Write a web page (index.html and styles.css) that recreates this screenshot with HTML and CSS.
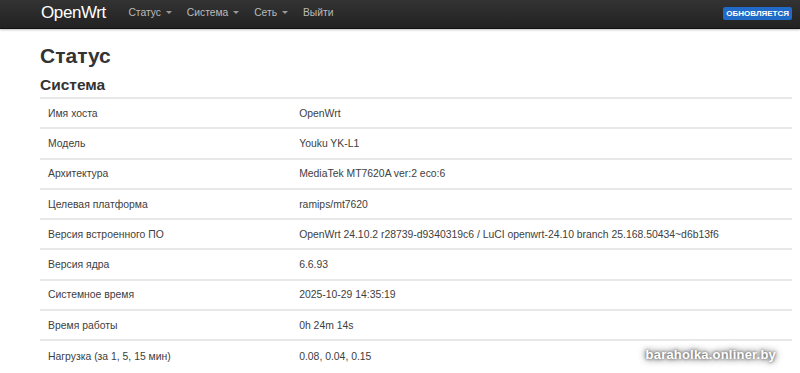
FILE: index.html
```html
<!DOCTYPE html>
<html lang="ru">
<head>
    <meta charset="UTF-8">
    <meta name="viewport" content="width=device-width, initial-scale=1.0">
    <title>OpenWrt - Статус</title>
    <link rel="stylesheet" href="styles.css">
</head>
<body>
    <!-- Top navigation -->
    <div class="navbar">
        <div class="container nav-inner">
            <a class="brand" href="#">OpenWrt</a>
            <ul class="nav">
                <li><a href="#">Статус <span class="caret"></span></a></li>
                <li><a href="#">Система <span class="caret"></span></a></li>
                <li><a href="#">Сеть <span class="caret"></span></a></li>
                <li><a href="#">Выйти</a></li>
            </ul>
            <span class="badge">Обновляется</span>
        </div>
    </div>

    <div class="container main">
        <h2>Статус</h2>
        <h3>Система</h3>
        <table class="status-table">
            <tr><td class="label">Имя хоста</td><td>OpenWrt</td></tr>
            <tr><td class="label">Модель</td><td>Youku YK-L1</td></tr>
            <tr><td class="label">Архитектура</td><td>MediaTek MT7620A ver:2 eco:6</td></tr>
            <tr><td class="label">Целевая платформа</td><td>ramips/mt7620</td></tr>
            <tr><td class="label">Версия встроенного ПО</td><td>OpenWrt 24.10.2 r28739-d9340319c6 / LuCI openwrt-24.10 branch 25.168.50434~d6b13f6</td></tr>
            <tr><td class="label">Версия ядра</td><td>6.6.93</td></tr>
            <tr><td class="label">Системное время</td><td>2025-10-29 14:35:19</td></tr>
            <tr><td class="label">Время работы</td><td>0h 24m 14s</td></tr>
            <tr><td class="label">Нагрузка (за 1, 5, 15 мин)</td><td>0.08, 0.04, 0.15</td></tr>
        </table>
    </div>

    <div class="watermark">baraholka.onliner.by</div>
</body>
</html>
```

FILE: styles.css
```css
/* General styles */
* {
    margin: 0;
    padding: 0;
    box-sizing: border-box;
}

body {
    font-family: 'Liberation Sans', Arial, sans-serif;
    font-size: 10.4px;
    color: #404040;
    background: #fff;
    height: 373px;
    overflow: hidden;
    position: relative;
}

.container {
    margin-left: 40px;
    width: 752px;
}

/* Navbar */
.navbar {
    height: 29px;
    background: linear-gradient(to bottom, #333, #222);
    border-bottom: 1px solid #111;
    box-shadow: 0 1px 2px rgba(0, 0, 0, 0.25);
}

.nav-inner {
    display: flex;
    align-items: flex-start;
    height: 28px;
    padding-top: 4px;
}

.brand {
    color: #fff;
    font-size: 17px;
    line-height: 18px;
    text-decoration: none;
    margin-left: 1px;
    margin-right: 15px;
    letter-spacing: -0.4px;
}

.nav {
    list-style: none;
    display: flex;
    flex: 1;
}

.nav a {
    display: block;
    color: #bbb;
    text-decoration: none;
    font-size: 10.3px;
    line-height: 18px;
    padding: 0 7.5px;
}

.caret {
    display: inline-block;
    width: 0;
    height: 0;
    vertical-align: middle;
    margin-left: 2px;
    margin-top: -1px;
    border-left: 3px solid transparent;
    border-right: 3px solid transparent;
    border-top: 3px solid #999;
}

.badge {
    background: #1f6bc7;
    color: #fff;
    font-size: 8px;
    font-weight: bold;
    text-transform: uppercase;
    padding: 2px 3px 1px;
    border-radius: 2px;
    line-height: 10px;
    margin-top: 3px;
}

/* Content */
.main h2 {
    font-size: 21px;
    font-weight: bold;
    color: #333;
    margin-top: 14px;
    line-height: 26px;
}

.main h3 {
    font-size: 15.5px;
    font-weight: bold;
    color: #333;
    margin-top: 6px;
    line-height: 20px;
}

.status-table {
    width: 100%;
    border-collapse: collapse;
    margin-top: 2px;
}

.status-table td {
    border-top: 2px solid #e8e8e8;
    padding: 0 8px;
    height: 30.3px;
    vertical-align: middle;
}

.status-table td.label {
    width: 33.4%;
}

.watermark {
    position: absolute;
    right: 24px;
    bottom: 11px;
    font-size: 13px;
    font-weight: bold;
    color: #fff;
    letter-spacing: 0.2px;
    text-shadow: 0 0 3px #555, 0 0 6px #777, 0 0 8px #999;
}
```
